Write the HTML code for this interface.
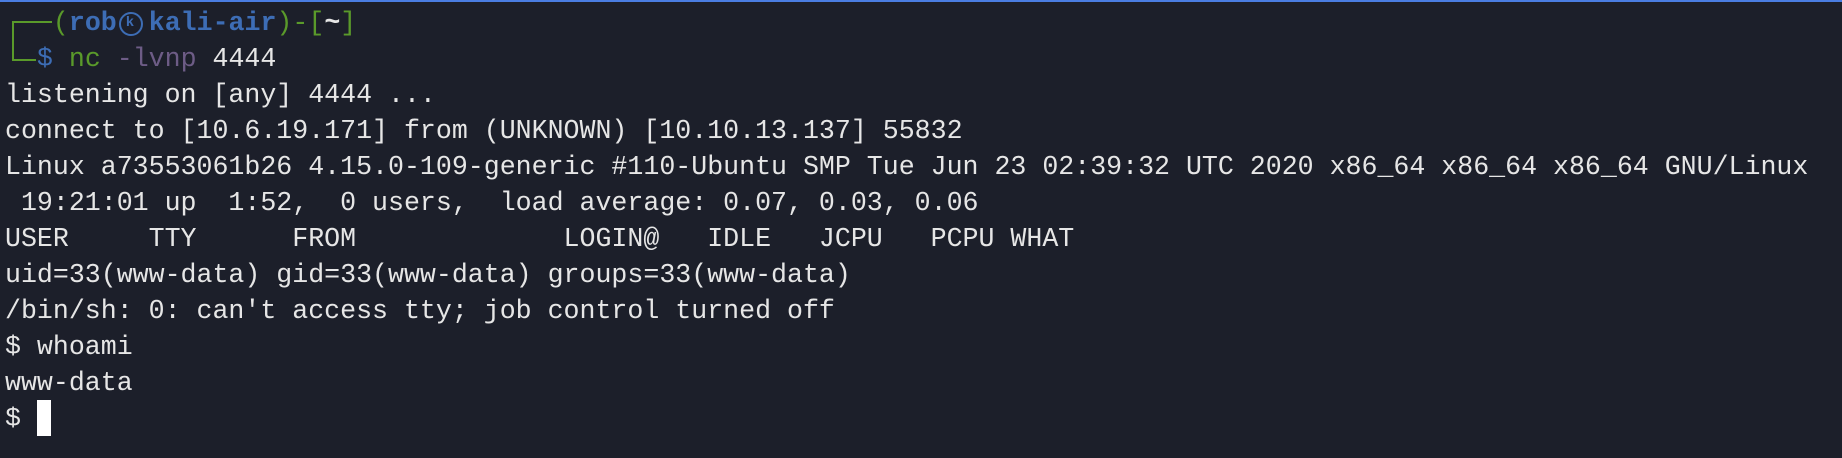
<!DOCTYPE html>
<html><head><meta charset="utf-8"><style>
html,body{margin:0;padding:0;}
body{width:1842px;height:458px;background:#1c1f2a;position:relative;overflow:hidden;font-family:"Liberation Mono",monospace;font-size:26.6px;color:#e6e6e6;}
.bar{position:absolute;left:0;top:0;width:1842px;height:2px;background:#4a7de2;}
.l{position:absolute;left:5px;height:36px;line-height:36px;white-space:pre;}
.g{color:#5a9a2a}.b{color:#3d6db5;font-weight:bold}.p{color:#6d5c86}.w{color:#e6e6e6;font-weight:bold}.bl{color:#3d6db5}
.bx{position:absolute;background:#5a9a2a;}
.cur{position:absolute;left:37px;top:400px;width:14px;height:36px;background:#fff;}
.cw{display:inline-block;width:32px;height:20px;position:relative;vertical-align:-2px;}
.circ{position:absolute;left:2px;top:0;width:24px;height:24px;border:2px solid #3d6db5;border-radius:50%;box-sizing:border-box;}
.circ:after{content:"k";position:absolute;left:5px;top:-9px;font-size:14px;color:#3d6db5;font-weight:bold}
</style></head><body>
<div class="bar"></div>
<div class="bx" style="left:12px;top:22px;width:2px;height:39px"></div>
<div class="bx" style="left:12px;top:21px;width:40px;height:2px"></div>
<div class="bx" style="left:12px;top:59px;width:24px;height:2px"></div>
<div class="l" style="top:5px">   <span class="g">(</span><span class="b">rob<span class="cw"><span class="circ"></span></span>kali-air</span><span class="g">)-[</span><span class="w">~</span><span class="g">]</span></div>
<div class="l" style="top:41px">  <span class="bl">$</span> <span class="g">nc</span> <span class="p">-lvnp</span> 4444</div>
<div class="l" style="top:77px">listening on [any] 4444 ...</div>
<div class="l" style="top:113px">connect to [10.6.19.171] from (UNKNOWN) [10.10.13.137] 55832</div>
<div class="l" style="top:149px">Linux a73553061b26 4.15.0-109-generic #110-Ubuntu SMP Tue Jun 23 02:39:32 UTC 2020 x86_64 x86_64 x86_64 GNU/Linux</div>
<div class="l" style="top:185px"> 19:21:01 up  1:52,  0 users,  load average: 0.07, 0.03, 0.06</div>
<div class="l" style="top:221px">USER     TTY      FROM             LOGIN@   IDLE   JCPU   PCPU WHAT</div>
<div class="l" style="top:257px">uid=33(www-data) gid=33(www-data) groups=33(www-data)</div>
<div class="l" style="top:293px">/bin/sh: 0: can't access tty; job control turned off</div>
<div class="l" style="top:329px">$ whoami</div>
<div class="l" style="top:365px">www-data</div>
<div class="l" style="top:401px">$</div>
<div class="cur"></div>
</body></html>
